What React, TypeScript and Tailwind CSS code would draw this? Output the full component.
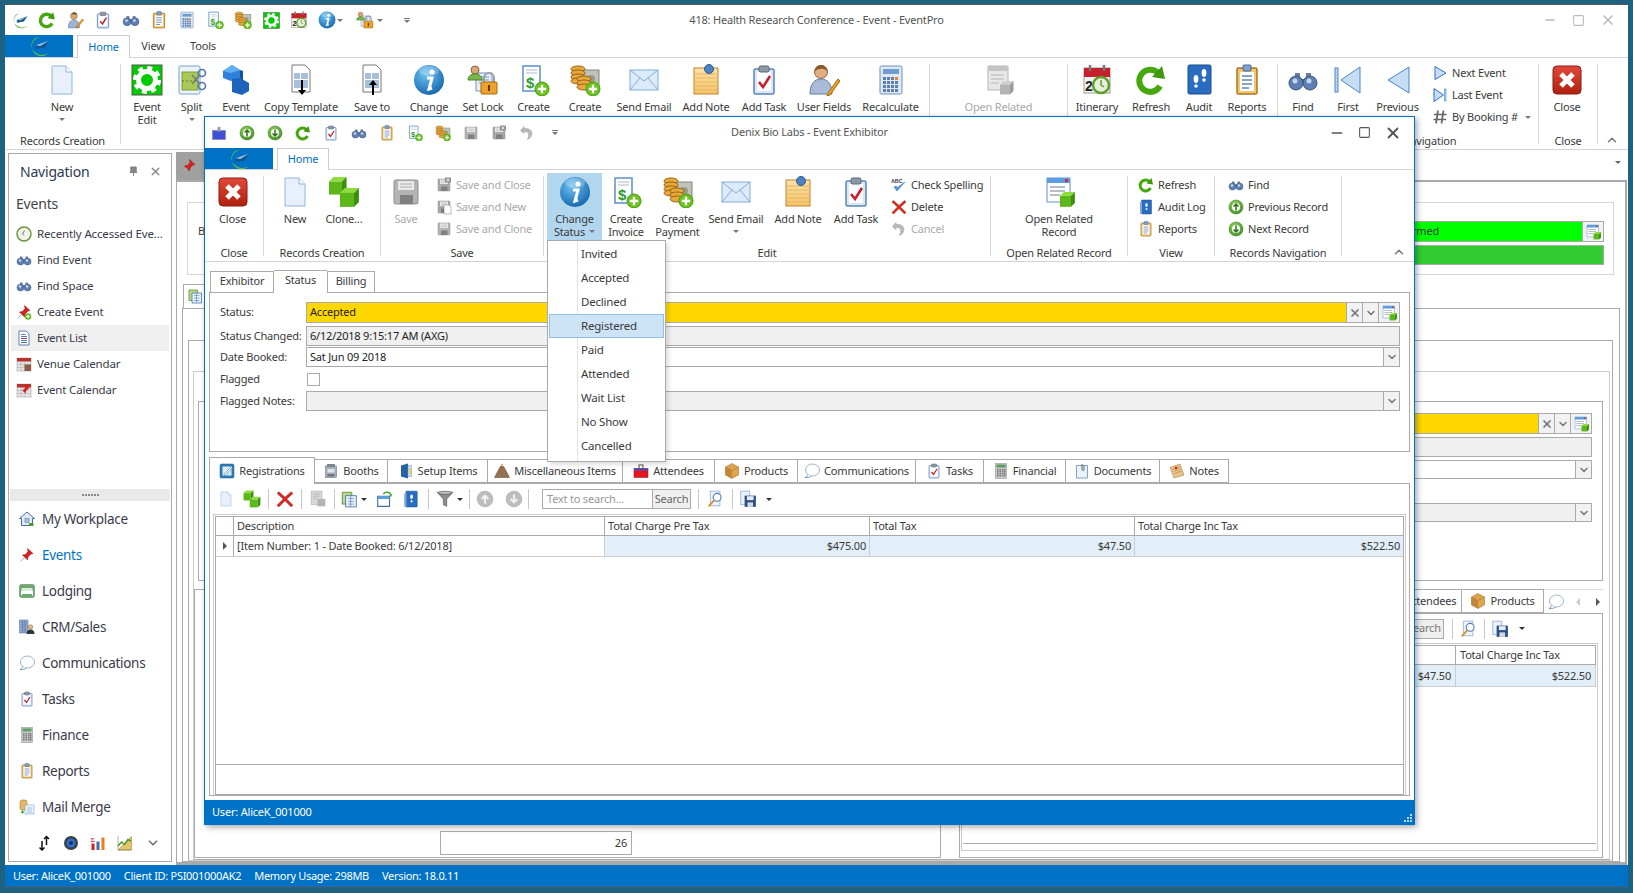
import type { ReactNode } from "react";
import { X, Minus, Square, ChevronDown, ChevronUp } from "lucide-react";

function Cube({ x, y, s, a = "#8fdc3c", b = "#5cb81a", c = "#3a8f0e" }: { x: number; y: number; s: number; a?: string; b?: string; c?: string }) {
  const d = s * 0.35;
  return (
    <g>
      <path d={`M${x} ${y + d}L${x + d} ${y}H${x + s + d}L${x + s} ${y + d}z`} fill={a} />
      <path d={`M${x} ${y + d}H${x + s}V${y + d + s}H${x}z`} fill={b} />
      <path d={`M${x + s} ${y + d}L${x + s + d} ${y}V${y + s}L${x + s} ${y + d + s}z`} fill={c} />
    </g>
  );
}

const Plus = ({ x = 24, y = 24, r = 7 }: { x?: number; y?: number; r?: number }) => (
  <g>
    <circle cx={x} cy={y} r={r} fill="#6cc21e" stroke="#4b9a10" />
    <path d={`M${x - r * 0.6} ${y}h${r * 1.2}M${x} ${y - r * 0.6}v${r * 1.2}`} stroke="#fff" strokeWidth="2.4" />
  </g>
);

const Bino = () => (
  <g>
    <rect x="8" y="9" width="5" height="7" fill="#6d7f99" />
    <rect x="19" y="9" width="5" height="7" fill="#6d7f99" />
    <rect x="13" y="15" width="6" height="5" fill="#46597a" />
    <circle cx="9" cy="19" r="7" fill="#5d80b4" stroke="#3e5578" />
    <circle cx="23" cy="19" r="7" fill="#5d80b4" stroke="#3e5578" />
    <circle cx="8" cy="17" r="2.5" fill="#c3d6ee" />
    <circle cx="22" cy="17" r="2.5" fill="#c3d6ee" />
  </g>
);

const Clip = ({ c = "#5b84c0", check = true }: { c?: string; check?: boolean }) => (
  <g>
    <rect x="6" y="5" width="20" height="25" rx="1.5" fill="#dbe7f6" stroke={c} strokeWidth="1.5" />
    <rect x="9" y="8" width="14" height="19" fill="#fff" />
    <rect x="11" y="2" width="10" height="6" rx="1.5" fill="#8e98a4" stroke="#5d6670" />
    {check ? <path d="M11 18l4 5 7-11" fill="none" stroke="#c8202a" strokeWidth="2.6" /> : null}
  </g>
);

const Floppy = ({ c = "#b4b4b4" }: { c?: string }) => (
  <g>
    <rect x="4" y="4" width="24" height="24" rx="1.5" fill={c} stroke="#8f8f8f" />
    <rect x="8" y="5" width="16" height="9" fill="#e9e9e9" />
    <path d="M10 8h12M10 11h12" stroke="#b0b0b0" />
    <rect x="10" y="19" width="13" height="9" fill="#808080" />
  </g>
);

const I: Record<string, ReactNode> = {
  swirl: (
    <g>
      <path d="M17 3A14 14 0 1 0 30 26 16 16 0 0 1 9 24 12 12 0 0 1 17 3z" fill="#5cc23e" />
      <path d="M11 15L31 8 24 18 11 20z" fill="#14538c" />
      <path d="M11 15L31 8 18 16z" fill="#8cc4ec" />
    </g>
  ),
  refresh: (
    <g>
      <path d="M23 9A11 11 0 1 0 25 22" fill="none" stroke="#46a80e" strokeWidth="6" />
      <path d="M17 13L30 15 27 2z" fill="#3e9a0c" />
    </g>
  ),
  user: (
    <g>
      <circle cx="14" cy="9" r="6" fill="#d9a878" stroke="#8d6238" />
      <path d="M12 3a6 5 0 0 1 8 3l-10 0z" fill="#7a5228" />
      <path d="M4 30c0-10 4-14 10-14s10 4 10 14z" fill="#9fb4d3" stroke="#6a7d9c" />
      <path d="M19 27L29 14l2 2-10 13-3 1z" fill="#f0a020" stroke="#a86a10" />
    </g>
  ),
  task: <Clip />,
  bino: <Bino />,
  report: (
    <g>
      <rect x="6" y="4" width="20" height="26" rx="1.5" fill="#f2c770" stroke="#a8761c" strokeWidth="1.5" />
      <rect x="9" y="8" width="14" height="19" fill="#fff" />
      <rect x="12" y="1" width="8" height="6" rx="1" fill="#7fa3cf" stroke="#44689a" />
      <path d="M11 12h10M11 16h10M11 20h10M11 24h7" stroke="#5b84c0" strokeWidth="1.5" />
    </g>
  ),
  calc: (
    <g>
      <rect x="5" y="2" width="22" height="28" rx="1.5" fill="#dfe9f5" stroke="#6a8fc0" />
      <rect x="8" y="5" width="16" height="5" fill="#6f9bd3" />
      {[13, 17, 21, 25].map((y) => [8, 12, 16, 20].map((x) => <rect key={`${x}-${y}`} x={x} y={y} width="3" height="3" fill={x === 20 && y < 17 ? "#e08a20" : "#5d7fae"} />))}
    </g>
  ),
  invoice: (
    <g>
      <path d="M5 2h17v25H5z" fill="#fff" stroke="#5b8fcf" strokeWidth="1.5" />
      <path d="M8 6h11M8 9h11" stroke="#b0b8c4" />
      <text x="8" y="24" fontSize="15" fontWeight="700" fill="#2f9a30" fontFamily="'Liberation Sans',sans-serif">$</text>
      <Plus x={24} y={25} />
    </g>
  ),
  coins: (
    <g>
      <rect x="13" y="6" width="17" height="18" fill="#c0c4b8" stroke="#80857a" />
      <circle cx="22" cy="15" r="4" fill="#969c8c" />
      {[5, 9, 13, 17].map((y) => <ellipse key={y} cx="9" cy={y} rx="7" ry="3" fill="#e8a83c" stroke="#9a6414" />)}
      {[15, 19, 23].map((y) => <ellipse key={y} cx="15" cy={y} rx="7" ry="3" fill="#e8a83c" stroke="#9a6414" />)}
      <Plus x={24} y={25} />
    </g>
  ),
  gear: (
    <g>
      <rect x="1" y="1" width="30" height="30" fill="#00cc00" stroke="#555" />
      <circle cx="16" cy="16" r="8.5" fill="none" stroke="#fff" strokeWidth="5" />
      <circle cx="16" cy="16" r="12" fill="none" stroke="#fff" strokeWidth="4" strokeDasharray="5 4.4" />
    </g>
  ),
  cal20: (
    <g>
      <rect x="3" y="4" width="26" height="25" fill="#f4f4f4" stroke="#999" />
      <rect x="3" y="4" width="26" height="9" fill="#c8202a" />
      <path d="M9 1v6M23 1v6" stroke="#777" strokeWidth="2.5" />
      <text x="4" y="27" fontSize="14" fontWeight="700" fill="#222" fontFamily="'Liberation Sans',sans-serif">2</text>
      <circle cx="20" cy="21" r="8" fill="#e8f0dc" stroke="#5fa02a" strokeWidth="2.5" />
      <path d="M20 16v5l3 2" stroke="#5fa02a" fill="none" strokeWidth="1.5" />
    </g>
  ),
  info: (
    <g>
      <circle cx="16" cy="16" r="15" fill="url(#gBlue)" />
      <ellipse cx="16" cy="7" rx="10" ry="5" fill="#fff" opacity="0.25" />
      <circle cx="19" cy="8" r="2.6" fill="#fff" />
      <path d="M14 14h5l-3 11 3-1" fill="none" stroke="#fff" strokeWidth="3" />
    </g>
  ),
  lock: (
    <g>
      <path d="M9 9h16v18H9z" fill="#e8eff8" stroke="#6f93c4" />
      <path d="M12 13h10M12 16h10M12 19h5" stroke="#6f93c4" />
      <circle cx="8" cy="6" r="4" fill="#d9a878" stroke="#8d6238" />
      <path d="M1 16c0-4 3-6 7-6s7 2 7 6z" fill="#7ab648" stroke="#4c8424" />
      <path d="M17 18v-4a5 5 0 0 1 10 0v4" fill="none" stroke="#9aa0a8" strokeWidth="2" />
      <rect x="14" y="18" width="16" height="12" rx="1" fill="#eda22a" stroke="#a36a10" />
      <rect x="21" y="21" width="2" height="6" fill="#5c3a08" />
    </g>
  ),
  newdoc: (
    <g>
      <path d="M6 2h14l6 6v22H6z" fill="#e8f1fb" stroke="#8fb4dc" />
      <path d="M20 2v6h6" fill="#fff" stroke="#8fb4dc" />
    </g>
  ),
  split: (
    <g>
      <rect x="3" y="2" width="21" height="28" rx="1.5" fill="#edf3fa" stroke="#7a9ec8" />
      <rect x="6" y="8" width="16" height="18" fill="#a8c858" stroke="#7f9e36" />
      <path d="M6 17h16" stroke="#5d7a20" strokeDasharray="2 2" />
      <circle cx="26" cy="9" r="3.5" fill="none" stroke="#4c78b0" strokeWidth="1.6" />
      <circle cx="26" cy="22" r="3.5" fill="none" stroke="#4c78b0" strokeWidth="1.6" />
      <path d="M24 11l-8 9M24 20l-8-9" stroke="#6c7a88" strokeWidth="1.5" />
    </g>
  ),
  cube: (
    <g>
      <path d="M3 7l9-6 8 5v9l-9 2-8-3z" fill="#2f80d8" />
      <path d="M12 1l8 5-9 3-8-2z" fill="#5fb0f2" />
      <path d="M12 15l8-1 9 5v8l-7 4-10-3z" fill="#1c64bc" />
      <path d="M20 6l3 1v10l-3-3z" fill="#12529e" />
    </g>
  ),
  docdown: (
    <g>
      <path d="M7 1h13l5 5v22H7z" fill="#fff" stroke="#777" />
      <rect x="9" y="9" width="6" height="6" fill="#a8bfdc" />
      <rect x="16" y="9" width="7" height="6" fill="#a8bfdc" />
      <rect x="9" y="16" width="14" height="8" fill="#a8bfdc" />
      <path d="M17 16v12" stroke="#000" strokeWidth="2" />
      <path d="M13 26h8l-4 5z" fill="#000" />
    </g>
  ),
  docup: (
    <g>
      <path d="M7 1h13l5 5v22H7z" fill="#fff" stroke="#777" />
      <rect x="9" y="9" width="6" height="6" fill="#a8bfdc" />
      <rect x="16" y="9" width="7" height="6" fill="#a8bfdc" />
      <rect x="9" y="16" width="14" height="8" fill="#a8bfdc" />
      <path d="M17 31V19" stroke="#000" strokeWidth="2" />
      <path d="M13 21h8l-4-5z" fill="#000" />
    </g>
  ),
  mail: (
    <g>
      <rect x="2" y="6" width="28" height="20" fill="#dcebfa" stroke="#84a9d4" />
      <path d="M2 6l14 11L30 6M2 26l10-12M30 26L20 14" fill="none" stroke="#84a9d4" />
    </g>
  ),
  note: (
    <g>
      <rect x="4" y="4" width="24" height="26" fill="url(#gOrange)" stroke="#c6802c" />
      <path d="M4 10h24M4 14h24M4 18h24M4 22h24M4 26h24" stroke="#e4b464" />
      <circle cx="19" cy="5" r="4.5" fill="#4d82bf" stroke="#2c5a90" />
    </g>
  ),
  fields: (
    <g>
      <circle cx="13" cy="8" r="6.5" fill="#e0ad82" stroke="#8d6238" />
      <path d="M7 7c0-5 4-6 6-6s6 1 6 6c-3-3-8-3-12 0z" fill="#8a5a2a" />
      <path d="M2 30c0-11 5-15 11-15s11 4 11 15z" fill="#a9bbd8" stroke="#6a7d9c" />
      <path d="M20 29L30 15l2 2-10 14-3 1z" fill="#f0a020" stroke="#a86a10" />
    </g>
  ),
  related0: (
    <g>
      <path d="M5 2h20v24H5z" fill="#e8e8e8" stroke="#b5b5b5" />
      <rect x="5" y="2" width="20" height="5" fill="#c4c4c4" />
      <path d="M8 11h13M8 15h13M8 19h8" stroke="#b5b5b5" />
      <Cube x={17} y={17} s={10} a="#d0d0d0" b="#b4b4b4" c="#9a9a9a" />
    </g>
  ),
  related: (
    <g>
      <path d="M4 2h23v24H4z" fill="#fff" stroke="#5d8fca" />
      <rect x="4" y="2" width="23" height="5" fill="#5d9ce0" />
      <rect x="22" y="3" width="3" height="3" fill="#d03030" />
      <path d="M7 11h15M7 15h15M7 19h10" stroke="#6a7a90" />
      <Cube x={17} y={16} s={11} />
    </g>
  ),
  audit: (
    <g>
      <rect x="5" y="1" width="23" height="29" rx="1.5" fill="#2a6cc0" stroke="#1a4c90" />
      <ellipse cx="13" cy="15" rx="2.4" ry="4" fill="#fff" />
      <circle cx="13" cy="22" r="1.8" fill="#fff" />
      <ellipse cx="21" cy="9" rx="2.4" ry="4" fill="#fff" />
      <circle cx="21" cy="16" r="1.8" fill="#fff" />
    </g>
  ),
  first: (
    <g>
      <rect x="3" y="4" width="3" height="24" fill="#bcd6f2" stroke="#4a86c8" />
      <path d="M28 3v26L9 16z" fill="#c6ddf5" stroke="#4a86c8" />
    </g>
  ),
  prev: <path d="M27 3v26L6 16z" fill="#c6ddf5" stroke="#4a86c8" />,
  next: <path d="M6 3v26l22-13z" fill="#c6ddf5" stroke="#2e72bd" strokeWidth="2" />,
  last: (
    <g>
      <path d="M4 3v26l19-13z" fill="#c6ddf5" stroke="#2e72bd" strokeWidth="2" />
      <rect x="25" y="4" width="3" height="24" fill="#bcd6f2" stroke="#2e72bd" />
    </g>
  ),
  hash: <path d="M12 3L8 29M23 3l-4 26M4 11h25M3 21h25" stroke="#666" strokeWidth="3.4" fill="none" />,
  close: (
    <g>
      <rect x="2" y="2" width="28" height="28" rx="4" fill="url(#gRed)" stroke="#8e1a10" />
      <path d="M10 10l12 12M22 10L10 22" stroke="#fff" strokeWidth="5" />
    </g>
  ),
  clone: (
    <g>
      <Cube x={1} y={1} s={13} />
      <Cube x={12} y={12} s={14} />
    </g>
  ),
  floppy: <Floppy />,
  floppyx: (
    <g>
      <Floppy c="#a8a8a8" />
      <rect x="18" y="1" width="12" height="10" fill="#8f8f8f" />
      <path d="M21 3l6 6M27 3l-6 6" stroke="#fff" strokeWidth="1.6" />
    </g>
  ),
  floppynew: (
    <g>
      <Floppy c="#a8a8a8" />
      <path d="M16 12h10l4 4v14H16z" fill="#fff" stroke="#777" />
    </g>
  ),
  undo: <path d="M10 3L3 11l7 6v-4c6-1 11 2 9 10l-2 6c8-4 10-10 8-16-2-5-8-7-15-6z" fill="#b9b9b9" stroke="#999" />,
  up: (
    <g>
      <circle cx="16" cy="16" r="14" fill="url(#gGreen)" stroke="#2e6e14" />
      <circle cx="16" cy="16" r="8" fill="#fff" />
      <path d="M16 23V11M11 15l5-5 5 5" fill="none" stroke="#2e6e14" strokeWidth="3" />
    </g>
  ),
  down: (
    <g>
      <circle cx="16" cy="16" r="14" fill="url(#gGreen)" stroke="#2e6e14" />
      <circle cx="16" cy="16" r="8" fill="#fff" />
      <path d="M16 9v12M11 17l5 5 5-5" fill="none" stroke="#2e6e14" strokeWidth="3" />
    </g>
  ),
  up0: (
    <g>
      <circle cx="16" cy="16" r="14" fill="#bdbdbd" stroke="#a0a0a0" />
      <path d="M16 24V11M10 16l6-6 6 6" fill="none" stroke="#f2f2f2" strokeWidth="3.6" />
    </g>
  ),
  down0: (
    <g>
      <circle cx="16" cy="16" r="14" fill="#bdbdbd" stroke="#a0a0a0" />
      <path d="M16 8v13M10 16l6 6 6-6" fill="none" stroke="#f2f2f2" strokeWidth="3.6" />
    </g>
  ),
  badge: (
    <g>
      <rect x="3" y="11" width="26" height="18" fill="#3f4fd8" stroke="#6f7fa0" />
      <rect x="13" y="4" width="6" height="9" fill="#9a9aa4" />
    </g>
  ),
  abc: (
    <g>
      <text x="0" y="11" fontSize="11" fontWeight="700" fill="#3c3c50" fontFamily="'Liberation Sans',sans-serif">ABC</text>
      <path d="M6 20l6 8L28 10l-15 11-3-3z" fill="#5d92d4" stroke="#2e6ab0" />
    </g>
  ),
  redx: <path d="M5 3l11 10L27 3l3 3-11 10 11 11-3 3-11-11L5 30l-3-3 11-11L2 6z" fill="#d8281e" stroke="#a81a12" />,
  pin: (
    <g>
      <path d="M17 3l11 10-4 1-6 6-1 6-10-10 6-1 5-6z" fill="#d81e1e" stroke="#8e1010" />
      <path d="M12 20l-9 9" stroke="#b0b0b0" strokeWidth="2" />
    </g>
  ),
  pinplus: (
    <g>
      <path d="M17 3l11 10-4 1-6 6-1 6-10-10 6-1 5-6z" fill="#d81e1e" stroke="#8e1010" />
      <path d="M12 20l-9 9" stroke="#b0b0b0" strokeWidth="2" />
      <Plus x={24} y={25} r={6} />
    </g>
  ),
  clock: (
    <g>
      <circle cx="16" cy="16" r="14" fill="#f0f4ea" stroke="#6f9440" strokeWidth="3" />
      <path d="M17 9l-4 7 3 3" fill="none" stroke="#555" strokeWidth="1.6" />
    </g>
  ),
  list: (
    <g>
      <path d="M6 2h14l6 6v22H6z" fill="#fff" stroke="#2e5d9c" strokeWidth="1.5" />
      <path d="M10 9h9M10 13h12M10 17h12M10 21h12M10 25h12" stroke="#1f4fa0" strokeWidth="1.5" />
      <path d="M10 17h12" stroke="#c8202a" strokeWidth="1.5" />
    </g>
  ),
  venue: (
    <g>
      <rect x="2" y="4" width="28" height="26" fill="#e4e4e4" stroke="#999" />
      <rect x="2" y="4" width="28" height="7" fill="#b8322a" />
      <path d="M2 17h28M2 23h28M10 11v19M18 11v19" stroke="#aaa" />
      <rect x="17" y="17" width="13" height="13" fill="#8e5a44" />
    </g>
  ),
  evcal: (
    <g>
      <rect x="2" y="4" width="28" height="26" fill="#e4e4e4" stroke="#999" />
      <rect x="2" y="4" width="28" height="7" fill="#b8322a" />
      <path d="M2 17h28M2 23h28M10 11v19M18 11v19" stroke="#aaa" />
      <path d="M19 6l8 7-3 1-4 4-1 5-7-7 4-1 3-5z" fill="#d81e1e" />
    </g>
  ),
  home: (
    <g>
      <path d="M16 2L1 15h4v14h22V15h4z" fill="#e2ebf6" stroke="#3f6ea8" strokeWidth="2" />
      <rect x="12" y="15" width="8" height="8" fill="#a9c3e2" stroke="#3f6ea8" />
      <rect x="20" y="24" width="9" height="6" fill="#4f9a2a" />
    </g>
  ),
  bed: (
    <g>
      <rect x="1" y="3" width="30" height="26" rx="4" fill="#6fa76e" stroke="#4e8050" />
      <rect x="5" y="10" width="22" height="6" fill="#dcead8" />
      <rect x="4" y="16" width="24" height="6" fill="#fff" />
      <path d="M5 22v3M27 22v3" stroke="#fff" strokeWidth="2" />
    </g>
  ),
  crm: (
    <g>
      <rect x="1" y="2" width="17" height="26" fill="#90a8cc" stroke="#56709a" />
      <path d="M4 7h11M4 12h11M4 17h11M4 22h11M7 2v26M12 2v26" stroke="#56709a" />
      <circle cx="23" cy="16" r="4.5" fill="#e8b880" stroke="#87613a" />
      <path d="M15 30c0-6 3-9 8-9s8 3 8 9z" fill="#2e3440" />
    </g>
  ),
  bubble: (
    <g>
      <ellipse cx="17" cy="14" rx="14" ry="12" fill="#fff" stroke="#8aa0b8" strokeWidth="1.6" />
      <path d="M8 23c-1 3-3 5-6 6 6 1 10-1 13-3" fill="#fff" stroke="#5588bb" strokeWidth="1.6" />
    </g>
  ),
  calcg: (
    <g>
      <rect x="5" y="1" width="22" height="30" fill="#c8c8c8" stroke="#8a8a8a" />
      <rect x="7" y="3" width="18" height="6" fill="#5f9e68" />
      {[12, 16, 20, 24].map((y) => [8, 13, 18, 22].map((x) => <rect key={`${x}${y}`} x={x} y={y} width="3" height="3" fill="#777" />))}
    </g>
  ),
  merge: (
    <g>
      <rect x="2" y="2" width="14" height="20" rx="4" fill="#e4b964" stroke="#96702a" />
      <path d="M12 12h18v18H12z" fill="#eef4fb" stroke="#5d8fca" />
      <path d="M16 18h10M16 22h10M16 26h10" stroke="#5d8fca" />
      <path d="M4 26h6M7 23v6" stroke="#3ea81e" strokeWidth="2.5" />
    </g>
  ),
  updown: (
    <g>
      <path d="M12 12v18M7 25l5 5 5-5" fill="none" stroke="#111" strokeWidth="3" />
      <path d="M21 20V3M16 8l5-5 5 5" fill="none" stroke="#111" strokeWidth="3" />
    </g>
  ),
  globe: (
    <g>
      <circle cx="16" cy="16" r="14" fill="#3a3f4a" />
      <circle cx="16" cy="16" r="9" fill="#2f6fd0" />
      <circle cx="16" cy="16" r="4" fill="#12345e" />
    </g>
  ),
  sigma: (
    <g>
      <text x="1" y="13" fontSize="14" fontWeight="700" fill="#d81e1e" fontFamily="'Liberation Serif',serif">Σ</text>
      <rect x="3" y="17" width="6" height="13" fill="#d81e1e" />
      <rect x="13" y="13" width="6" height="17" fill="#3a6db0" />
      <rect x="23" y="5" width="6" height="25" fill="#f07a14" />
    </g>
  ),
  tri: (
    <g>
      <path d="M29 3v27H2z" fill="#e4c66c" stroke="#9a7a24" />
      <path d="M2 22l7-8 6 5 7-10 6 3" fill="none" stroke="#4a9a2a" strokeWidth="3" />
      <path d="M2 2v28h27" fill="none" stroke="#5a6a4a" />
    </g>
  ),
  reg: (
    <g>
      <rect x="2" y="2" width="28" height="28" rx="3" fill="#2b7cb8" stroke="#1a5888" />
      <rect x="7" y="7" width="18" height="18" fill="#dcecf8" />
      <path d="M10 23L25 6l2 3-14 16z" fill="#fff" stroke="#1a5888" />
    </g>
  ),
  booth: (
    <g>
      <rect x="5" y="6" width="22" height="23" fill="#a6aeb8" stroke="#626a74" />
      <rect x="8" y="2" width="16" height="6" fill="#7c8490" />
      <rect x="9" y="12" width="14" height="7" fill="#dfe5ec" />
      <rect x="9" y="22" width="14" height="5" fill="#6e7682" />
    </g>
  ),
  setup: (
    <g>
      <path d="M6 5l14-4v30L6 27z" fill="#2264a8" />
      <path d="M20 5h7v22h-7z" fill="#cfe0f0" stroke="#6f93c4" />
      <rect x="21" y="10" width="5" height="12" fill="#e8d06c" />
    </g>
  ),
  volcano: (
    <g>
      <path d="M1 29L12 8h8l11 21z" fill="#947152" stroke="#5e442e" />
      <path d="M12 8c2-4 6-4 8 0z" fill="#d8541e" />
      <path d="M14 5c-2-2 0-4 2-3 2-2 4 1 2 3z" fill="#bcbcbc" />
    </g>
  ),
  attend: (
    <g>
      <rect x="2" y="11" width="28" height="18" fill="#e8141c" stroke="#8c1014" />
      <path d="M2 11h28v4H2z" fill="#3f4fd8" />
      <rect x="12" y="4" width="8" height="8" fill="none" stroke="#555" strokeWidth="2" />
    </g>
  ),
  box: (
    <g>
      <path d="M16 1l13 7v16l-13 7-13-7V8z" fill="#dfa54c" stroke="#96682a" />
      <path d="M3 8l13 7 13-7" fill="none" stroke="#96682a" />
      <path d="M16 15v16L3 24V8z" fill="#c28638" />
    </g>
  ),
  docs: (
    <g>
      <path d="M5 5h22v25H5z" fill="#eaf2fb" stroke="#5b84c0" strokeWidth="1.5" />
      <path d="M16 2v11a2 2 0 0 0 4 0V6" fill="none" stroke="#444" strokeWidth="1.6" />
    </g>
  ),
  notes: (
    <g>
      <path d="M2 9L22 2l8 22-20 6z" fill="#e9c489" stroke="#9a6f34" />
      <path d="M7 13l14-5M9 17l14-5M11 21l14-5" stroke="#a87a38" />
      <circle cx="14" cy="10" r="2.5" fill="#d81e1e" />
    </g>
  ),
  cols: (
    <g>
      <path d="M4 4h17v21H4z" fill="#b9d98a" stroke="#5e8a2e" strokeWidth="1.5" />
      <path d="M10 10h19v20H10z" fill="#eaf2fb" stroke="#3f6ea8" strokeWidth="1.5" />
      <path d="M14 15h11M14 20h11M14 25h11M19 11v18" stroke="#3f6ea8" />
    </g>
  ),
  winrefresh: (
    <g>
      <path d="M3 11h21v18H3z" fill="#fff" stroke="#3f6ea8" strokeWidth="2" />
      <rect x="3" y="11" width="21" height="5" fill="#5d9ce0" />
      <path d="M13 7c4-5 12-4 14 2l-3 3" fill="none" stroke="#3ea81e" strokeWidth="2.6" />
    </g>
  ),
  auditSm: (
    <g>
      <rect x="7" y="2" width="20" height="28" rx="1" fill="#2a6cc0" stroke="#1a4c90" />
      <rect x="4" y="6" width="4" height="24" fill="#7fa8dc" />
      <ellipse cx="17" cy="12" rx="2.4" ry="4" fill="#fff" />
      <circle cx="17" cy="20" r="2" fill="#fff" />
    </g>
  ),
  funnel: (
    <g>
      <path d="M2 4h28L19 16v13l-6-3V16z" fill="#8f8f8f" stroke="#444" />
      <ellipse cx="16" cy="5" rx="13" ry="2.6" fill="#c4c4c4" stroke="#444" />
    </g>
  ),
  docgray: (
    <g>
      <path d="M4 2h19v24H4z" fill="#d8d8d8" stroke="#a8a8a8" />
      <path d="M7 7h13M7 11h13M7 15h8" stroke="#aaa" />
      <rect x="15" y="16" width="14" height="13" fill="#b4b4b4" />
    </g>
  ),
  magnify: (
    <g>
      <path d="M6 2h17v26H6z" fill="#eef4fb" stroke="#5d8fca" />
      <circle cx="18" cy="13" r="7" fill="#fff" stroke="#4d7db0" strokeWidth="2" />
      <path d="M13 18L3 29" stroke="#d88c20" strokeWidth="3" />
    </g>
  ),
  saveAs: (
    <g>
      <path d="M3 2h16v24H3z" fill="#eaf2fb" stroke="#5d8fca" />
      <rect x="10" y="10" width="20" height="20" fill="#2d4f84" />
      <rect x="14" y="11" width="12" height="7" fill="#e4ecf6" />
      <rect x="15" y="22" width="10" height="8" fill="#d0d8e4" />
    </g>
  ),
};

function Ico({ n, s = 32 }: { n: string; s?: number }) {
  return (
    <svg viewBox="0 0 32 32" width={s} height={s} className="shrink-0">
      {I[n]}
    </svg>
  );
}

const Drop = ({ c = "border-t-[#777]" }: { c?: string }) => (
  <span className={`inline-block w-0 h-0 border-x-[3px] border-x-transparent border-t-[3px] ${c}`} />
);

function Big({ w, n, label, label2, drop, off }: { w: string; n?: string; label?: string; label2?: string; drop?: boolean; off?: boolean }) {
  return (
    <div className={`flex flex-col items-center shrink-0 ${w} ${off ? "text-[#a9a9a9]" : ""}`}>
      <div className="h-[36px]">{n ? <Ico n={n} /> : null}</div>
      <div className="leading-[13px] whitespace-nowrap">{label}</div>
      {label2 ? <div className="leading-[13px] whitespace-nowrap">{label2}</div> : null}
      {drop ? <div className="leading-[13px] flex items-center h-[13px]"><Drop /></div> : null}
    </div>
  );
}

function Small({ n, label, off, drop, s = 16 }: { n: string; label: string; off?: boolean; drop?: boolean; s?: number }) {
  return (
    <div className={`h-[22px] flex items-center gap-[4px] whitespace-nowrap ${off ? "text-[#a9a9a9]" : ""}`}>
      <Ico n={n} s={s} />
      <span>{label}</span>
      {drop ? <span className="ml-[3px] flex"><Drop /></span> : null}
    </div>
  );
}

function Group({ label, children, cls = "", noSep }: { label: string; children: ReactNode; cls?: string; noSep?: boolean }) {
  return (
    <div className={`flex flex-col h-[80px] shrink-0 ${noSep ? "" : "border-r border-[#d8d8d8]"} ${cls}`}>
      <div className="flex flex-1 min-h-0">{children}</div>
      <div className="mb-[-4px] h-[14px] leading-[14px] text-center whitespace-nowrap">{label}</div>
    </div>
  );
}

function Fld({ cls, children }: { cls: string; children?: ReactNode }) {
  return <div className={`border border-[#aaa] flex items-center pl-[3px] text-[#222] whitespace-nowrap overflow-hidden ${cls}`}>{children}</div>;
}

const Chev = () => (
  <div className="w-[16px] h-full border-l border-[#aaa] bg-[#f2f2f2] flex items-center justify-center shrink-0">
    <ChevronDown size={12} strokeWidth={3} className="text-[#777]" />
  </div>
);

const StatusRowEnd = () => (
  <>
    <div className="w-[16px] h-full border-l border-[#aaa] bg-[#f2f2f2] flex items-center justify-center shrink-0">
      <X size={12} strokeWidth={3.5} className="text-[#777]" />
    </div>
    <Chev />
    <div className="w-[21px] h-full border-l border-[#aaa] bg-[#f2f2f2] flex items-center justify-center shrink-0">
      <Ico n="related" s={16} />
    </div>
  </>
);

function Tab({ w, n, label, active }: { w: string; n: string; label: string; active?: boolean }) {
  return (
    <div className={`${w} shrink-0 flex items-center justify-center gap-[4px] border border-[#aaa] border-l-0 first:border-l whitespace-nowrap ${active ? "h-[27px] -mb-px bg-white border-b-0 z-10 self-end" : "h-[24px] self-end"}`}>
      <Ico n={n} s={16} />
      <span>{label}</span>
    </div>
  );
}

const Sep = () => <div className="w-px h-[20px] bg-[#c8c8c8] shrink-0" />;

function TB({ w, n, drop, s = 18 }: { w: string; n: string; drop?: boolean; s?: number }) {
  return (
    <div className={`${w} shrink-0 flex items-center justify-center gap-[3px]`}>
      <Ico n={n} s={s} />
      {drop ? <Drop c="border-t-[#333]" /> : null}
    </div>
  );
}

const qatMain = ["swirl", "refresh", "user", "task", "bino", "report", "calc", "invoice", "coins", "gear", "cal20", "info"];
const qatDlg = ["badge", "up", "down", "refresh", "task", "bino", "report", "invoice", "coins", "floppy", "floppyx", "undo"];
const navTop = [
  ["clock", "Recently Accessed Eve…"],
  ["bino", "Find Event"],
  ["bino", "Find Space"],
  ["pinplus", "Create Event"],
  ["list", "Event List"],
  ["venue", "Venue Calendar"],
  ["evcal", "Event Calendar"],
];
const navBottom = [
  ["home", "My Workplace"],
  ["pin", "Events"],
  ["bed", "Lodging"],
  ["crm", "CRM/Sales"],
  ["bubble", "Communications"],
  ["task", "Tasks"],
  ["calcg", "Finance"],
  ["report", "Reports"],
  ["merge", "Mail Merge"],
];
const statuses = ["Invited", "Accepted", "Declined", "Registered", "Paid", "Attended", "Wait List", "No Show", "Cancelled"];

function Navigation() {
  return (
    <div className="w-[164px] shrink-0 mt-[3px] mb-[3px] border border-[#aaa] flex flex-col">
      <div className="flex items-center h-[34px] shrink-0 pl-[11px] text-[14px] tracking-[-0.2px] text-[#2c3a55]">
        <span className="flex-1">Navigation</span>
        <svg viewBox="0 0 10 12" width="9" height="11" className="mr-[11px]"><path d="M2 1h6v5l1 1H1l1-1zM5 7v4" fill="#888" stroke="#777" /></svg>
        <X size={13} strokeWidth={2.5} className="mr-[9px] text-[#888]" />
      </div>
      <div className="pl-[7px] h-[28px] shrink-0 pt-[2px] text-[14px] tracking-[-0.2px] leading-[28px] text-[#444]">Events</div>
      <div className="flex flex-col mt-[5px] px-[2px] text-[11.5px] tracking-[-0.15px] text-[#3a3a4a]">
        {navTop.map(([n, label]) => (
          <div key={label} className={`h-[26px] flex items-center pl-[5px] gap-[5px] whitespace-nowrap ${label === "Event List" ? "bg-[#efefef]" : ""}`}>
            <Ico n={n} s={16} />
            <span>{label}</span>
          </div>
        ))}
      </div>
      <div className="mt-auto mx-[1px] h-[12px] shrink-0 bg-[#e9e9e9] flex items-center justify-center gap-[1px]">
        {[0, 1, 2, 3, 4, 5].map((d) => <span key={d} className="w-[2px] h-[2px] bg-[#888]" />)}
      </div>
      <div className="flex flex-col text-[13.5px] tracking-[-0.3px] text-[#3a3a4a]">
        {navBottom.map(([n, label]) => (
          <div key={label} className="h-[36px] flex items-center pl-[10px] gap-[7px] whitespace-nowrap">
            <Ico n={n} s={16} />
            <span className={label === "Events" ? "text-[#0072c6]" : ""}>{label}</span>
          </div>
        ))}
      </div>
      <div className="h-[36px] shrink-0 flex items-center pl-[27px] gap-[11px]">
        <Ico n="updown" s={16} />
        <Ico n="globe" s={16} />
        <Ico n="sigma" s={16} />
        <Ico n="tri" s={16} />
        <ChevronDown size={14} strokeWidth={3} className="ml-[2px] text-[#777]" />
      </div>
    </div>
  );
}

function MainRibbon() {
  return (
    <div className="h-[92px] border-b border-[#d4d4d4] flex pt-[6px] relative">
      <Group label="Records Creation" cls="w-[116px]">
        <Big w="w-[114px]" n="newdoc" label="New" drop />
      </Group>
      <Group label="" noSep={false}>
        <Big w="w-[52px]" n="gear" label="Event" label2="Edit" />
        <Big w="w-[37px]" n="split" label="Split" drop />
        <Big w="w-[52px]" n="cube" label="Event" />
        <Big w="w-[78px]" n="docdown" label="Copy Template" />
        <Big w="w-[64px]" n="docup" label="Save to" />
        <Big w="w-[50px]" n="info" label="Change" />
        <Big w="w-[58px]" n="lock" label="Set Lock" />
        <Big w="w-[43px]" n="invoice" label="Create" />
        <Big w="w-[60px]" n="coins" label="Create" />
        <Big w="w-[58px]" n="mail" label="Send Email" />
        <Big w="w-[66px]" n="note" label="Add Note" />
        <Big w="w-[50px]" n="task" label="Add Task" />
        <Big w="w-[70px]" n="fields" label="User Fields" />
        <Big w="w-[63px]" n="calc" label="Recalculate" />
        <div className="w-[7px]" />
      </Group>
      <Group label="">
        <Big w="w-[137px]" n="related0" label="Open Related" off />
      </Group>
      <Group label="">
        <Big w="w-[58px]" n="cal20" label="Itinerary" />
        <Big w="w-[50px]" n="refresh" label="Refresh" />
        <Big w="w-[46px]" n="audit" label="Audit" />
        <Big w="w-[50px]" n="report" label="Reports" />
        <div className="w-[5px]" />
      </Group>
      <Group label="Records Navigation" cls="w-[261px]">
        <Big w="w-[50px]" n="bino" label="Find" />
        <Big w="w-[40px]" n="first" label="First" />
        <Big w="w-[59px]" n="prev" label="Previous" />
        <div className="mt-[-2px] ml-[5px]">
          <Small n="next" label="Next Event" />
          <Small n="last" label="Last Event" />
          <Small n="hash" label="By Booking #" drop />
        </div>
      </Group>
      <Group label="Close" cls="w-[59px]">
        <Big w="w-[56px]" n="close" label="Close" />
      </Group>
      <ChevronUp size={14} strokeWidth={2.5} className="mt-[69px] ml-[7px] text-[#777]" />
    </div>
  );
}

function Background() {
  return (
    <div className="flex-1 min-w-0 flex flex-col">
      <div className="h-[30px] flex items-end justify-between">
        <div className="w-[60px] h-[28px] bg-[#a0a0a0] flex items-center pl-[5px]">
          <Ico n="pin" s={16} />
        </div>
        <span className="mb-[12px] mr-[6px]"><Drop c="border-t-[#666]" /></span>
      </div>
      <div className="flex-1 min-h-0 border-t-2 border-r-2 border-l border-b-[3px] border-[#aaa] flex flex-col pt-[20px]">
        <div className="ml-[10px] mr-[11px] h-[73px] shrink-0 border border-[#d6d6d6] pl-[10px] pr-[9px] pt-[18px] flex flex-col gap-[3px]">
          <div className="flex h-[21px] items-center justify-between">
            <span>Booked</span>
            <div className="flex h-full border border-[#aaa]">
              <div className="w-[210px] bg-[#00ff00] pl-[14px] flex items-center">Confirmed</div>
              <div className="w-[21px] bg-[#f2f2f2] border-l border-[#aaa] flex items-center justify-center"><Ico n="related" s={16} /></div>
            </div>
          </div>
          <div className="h-[20px] ml-[100px] bg-[#33cc33] border border-[#aaa]" />
        </div>
        <div className="mt-[9px] ml-[6px] flex h-[24px] shrink-0">
          <div className="w-[60px] border border-[#aaa] border-b-0 pl-[3px] pt-[3px]"><Ico n="cols" s={16} /></div>
        </div>
        <div className="mx-[5px] mb-[0px] flex-1 min-h-0 border border-[#aaa] pt-[31px] flex flex-col">
          <div className="ml-[5px] mr-[6px] flex-1 min-h-0 border border-[#aaa] border-b-[#ccc] pt-[30px] flex flex-col">
            <div className="ml-[4px] mr-[2px] flex-1 min-h-0 border border-[#ccc] border-b-[#aaa] pt-[29px] pr-[6px] flex flex-col">
              <div className="ml-[4px] h-[180px] shrink-0 border border-[#aaa] pt-[11px] pr-[10px] pl-[100px] flex flex-col">
                <Fld cls="h-[21px] !pl-0"><div className="flex-1 h-full bg-[#ffd700]" /><StatusRowEnd /></Fld>
                <Fld cls="h-[20px] mt-[3px] bg-[#f0f0f0]" />
                <Fld cls="h-[19px] mt-[3px] !pl-0 justify-end"><Chev /></Fld>
                <Fld cls="h-[19px] mt-[24px] !pl-0 justify-end bg-[#f0f0f0]"><Chev /></Fld>
              </div>
              <div className="flex flex-1 min-h-0 mt-[8px] gap-[18px] mb-[1px]">
                <div className="w-[747px] shrink-0 border border-[#aaa] flex flex-col justify-end items-start pl-[245px] pb-[2px]">
                  <div className="w-[192px] h-[24px] border border-[#aaa] flex items-center justify-end pr-[4px]">26</div>
                </div>
                <div className="flex-1 min-w-0 flex flex-col">
                  <div className="flex h-[24px] shrink-0 justify-end items-end">
                    <Tab w="w-[82px]" n="attend" label="Attendees" />
                    <Tab w="w-[82px]" n="box" label="Products" />
                    <div className="w-[59px] h-[24px] overflow-hidden flex items-center pl-[4px] gap-[12px] border-t border-[#ddd]">
                      <Ico n="bubble" s={16} />
                      <span className="w-0 h-0 border-y-[4px] border-y-transparent border-r-[4px] border-r-[#ccc]" />
                      <span className="ml-[4px] w-0 h-0 border-y-[4px] border-y-transparent border-l-[4px] border-l-[#555]" />
                    </div>
                  </div>
                  <div className="flex-1 min-h-0 border border-[#aaa] pb-[6px] px-[1px] flex flex-col">
                    <div className="h-[29px] flex items-center justify-end pr-[76px] shrink-0">
                      <div className="w-[40px] h-[20px] border border-[#aaa] bg-[#efefef] text-[#777] flex items-center justify-center">Search</div>
                      <div className="w-[8px]" /><Sep />
                      <TB w="w-[31px]" n="magnify" /><Sep />
                      <TB w="w-[30px]" n="saveAs" />
                      <span className="ml-[4px] flex"><Drop c="border-t-[#333]" /></span>
                    </div>
                    <div className="flex-1 min-h-0 mr-[3px] border border-[#ccc] p-[1px] flex flex-col">
                      <div className="flex h-[20px] border border-[#aaa] justify-end items-center">
                        <div className="w-[140px] h-full border-l border-[#aaa] pl-[4px] flex items-center">Total Charge Inc Tax</div>
                      </div>
                      <div className="flex h-[22px] border-x border-b border-[#ccc] justify-end bg-[#e2eff9]">
                        <div className="flex-1 pr-[4px] text-right leading-[21px]">$47.50</div>
                        <div className="w-[140px] border-l border-[#ccc] pr-[4px] text-right leading-[21px]">$522.50</div>
                      </div>
                      <div className="flex-1" />
                      <div className="border-t border-[#aaa] h-[6px]" />
                    </div>
                  </div>
                </div>
              </div>
            </div>
          </div>
        </div>
      </div>
    </div>
  );
}

function StatusMenu() {
  return (
    <div className="absolute left-[342px] top-[123px] w-[119px] h-[222px] z-20 bg-white border border-[#aaa] shadow-[3px_3px_4px_rgba(0,0,0,0.12)] text-[11.5px]">
      <div className="absolute left-[29px] top-0 bottom-0 w-px bg-[#e2e2e2]" />
      <div className="flex flex-col pt-[1px] px-[1px] relative">
        {statuses.map((s) => (
          <div key={s} className={`h-[24px] flex items-center ${s === "Registered" ? "bg-[#cde4f7] border border-[#90c0e8] pl-[31px]" : "pl-[32px]"}`}>
            {s}
          </div>
        ))}
      </div>
    </div>
  );
}

function Dialog() {
  return (
    <div className="absolute left-[204px] top-[116px] w-[1211px] h-[709px] bg-white border border-[#0072c6] shadow-[2px_2px_6px_rgba(0,0,0,0.35)] flex flex-col text-[#3a3a3a]">
      <div className="h-[31px] shrink-0 grid grid-cols-[1fr_auto_1fr] items-center">
        <div className="flex items-center">
          {qatDlg.map((n, i) => (
            <div key={i} className="w-[28px] flex justify-center"><Ico n={n} s={16} /></div>
          ))}
          <div className="w-[28px] flex flex-col items-center gap-[1px]">
            <span className="w-[6px] h-px bg-[#777]" /><Drop />
          </div>
        </div>
        <div className="text-[#555]">Denix Bio Labs - Event Exhibitor</div>
        <div className="flex justify-end items-center gap-[13px] pr-[12px] text-[#555]">
          <Minus size={16} strokeWidth={2.5} />
          <Square size={13} strokeWidth={2} />
          <X size={18} strokeWidth={2.5} />
        </div>
      </div>
      <div className="h-[22px] shrink-0 flex border-b border-[#d4d4d4]">
        <div className="w-[68px] bg-[#0072c6] flex items-center justify-center"><Ico n="swirl" s={22} /></div>
        <div className="ml-[4px] w-[52px] h-[22px] border border-[#ccc] border-b-0 bg-white text-[#0072c6] flex items-center justify-center">Home</div>
      </div>
      <div className="h-[92px] shrink-0 border-b border-[#d4d4d4] flex pt-[6px]">
        <Group label="Close" cls="w-[59px]">
          <Big w="w-[55px]" n="close" label="Close" />
        </Group>
        <Group label="Records Creation" cls="w-[117px]">
          <Big w="w-[62px]" n="newdoc" label="New" />
          <Big w="w-[36px]" n="clone" label="Clone…" />
        </Group>
        <Group label="Save" cls="w-[163px]">
          <Big w="w-[50px]" n="floppy" label="Save" off />
          <div className="mt-[-2px] ml-[5px]">
            <Small n="floppyx" label="Save and Close" off />
            <Small n="floppynew" label="Save and New" off />
            <Small n="floppy" label="Save and Clone" off />
          </div>
        </Group>
        <Group label="Edit" cls="w-[447px]">
          <div className="ml-[3px] w-[55px] h-[68px] -mt-[3px] pt-[3px] bg-[#b2d6ee] flex flex-col items-center shrink-0">
            <div className="h-[36px]"><Ico n="info" /></div>
            <div className="leading-[13px]">Change</div>
            <div className="leading-[13px] flex items-center gap-[4px]">Status <Drop /></div>
          </div>
          <Big w="w-[48px]" n="invoice" label="Create" label2="Invoice" />
          <Big w="w-[55px]" n="coins" label="Create" label2="Payment" />
          <Big w="w-[62px]" n="mail" label="Send Email" drop />
          <Big w="w-[62px]" n="note" label="Add Note" />
          <Big w="w-[54px]" n="task" label="Add Task" />
          <div className="mt-[-2px] ml-[8px]">
            <Small n="abc" label="Check Spelling" />
            <Small n="redx" label="Delete" />
            <Small n="undo" label="Cancel" off />
          </div>
        </Group>
        <Group label="Open Related Record" cls="w-[137px]">
          <Big w="w-[136px]" n="related" label="Open Related" label2="Record" />
        </Group>
        <Group label="View" cls="w-[87px]">
          <div className="mt-[-2px] ml-[10px]">
            <Small n="refresh" label="Refresh" />
            <Small n="auditSm" label="Audit Log" />
            <Small n="report" label="Reports" />
          </div>
        </Group>
        <Group label="Records Navigation" cls="w-[127px]">
          <div className="mt-[-2px] ml-[13px]">
            <Small n="bino" label="Find" />
            <Small n="up" label="Previous Record" />
            <Small n="down" label="Next Record" />
          </div>
        </Group>
        <ChevronUp size={14} strokeWidth={2.5} className="mt-[69px] ml-[50px] text-[#777]" />
      </div>
      <div className="flex-1 min-h-0 flex flex-col px-[4px] pb-[4px] pt-[7px]">
        <div className="flex h-[23px] shrink-0 items-end ml-[1px]">
          <div className="w-[64px] h-[21px] border border-[#aaa] border-b-0 pb-[2px] flex items-center justify-center">Exhibitor</div>
          <div className="w-[53px] h-[23px] border-t border-[#aaa] bg-white -mb-px z-10 pb-[3px] flex items-center justify-center">Status</div>
          <div className="w-[48px] h-[21px] border border-[#aaa] border-b-0 pb-[2px] flex items-center justify-center">Billing</div>
        </div>
        <div className="h-[160px] shrink-0 border border-[#aaa] pt-[9px] pl-[10px] pr-[9px] flex flex-col">
          <div className="flex h-[21px] items-center">
            <span className="w-[86px] shrink-0 whitespace-nowrap">Status:</span>
            <Fld cls="flex-1 h-full !pl-0">
              <div className="flex-1 h-full bg-[#ffd700] pl-[3px] flex items-center">Accepted</div>
              <StatusRowEnd />
            </Fld>
          </div>
          <div className="flex h-[20px] items-center mt-[3px]">
            <span className="w-[86px] shrink-0 whitespace-nowrap">Status Changed:</span>
            <Fld cls="flex-1 h-full bg-[#f0f0f0]">6/12/2018 9:15:17 AM (AXG)</Fld>
          </div>
          <div className="flex h-[20px] items-center mt-[1px]">
            <span className="w-[86px] shrink-0 whitespace-nowrap">Date Booked:</span>
            <Fld cls="flex-1 h-full !pr-0 justify-between">Sat Jun 09 2018<Chev /></Fld>
          </div>
          <div className="flex h-[24px] items-center">
            <span className="w-[87px] shrink-0">Flagged</span>
            <span className="w-[13px] h-[13px] border border-[#aaa]" />
          </div>
          <div className="flex h-[20px] items-center">
            <span className="w-[86px] shrink-0 whitespace-nowrap">Flagged Notes:</span>
            <Fld cls="flex-1 h-full bg-[#f0f0f0] !pr-0 justify-end"><Chev /></Fld>
          </div>
        </div>
        <div className="flex h-[27px] mt-[4px] shrink-0 items-end relative">
          <Tab w="w-[106px]" n="reg" label="Registrations" active />
          <Tab w="w-[73px]" n="booth" label="Booths" />
          <Tab w="w-[100px]" n="setup" label="Setup Items" />
          <Tab w="w-[135px]" n="volcano" label="Miscellaneous Items" />
          <Tab w="w-[92px]" n="attend" label="Attendees" />
          <Tab w="w-[83px]" n="box" label="Products" />
          <Tab w="w-[118px]" n="bubble" label="Communications" />
          <Tab w="w-[68px]" n="task" label="Tasks" />
          <Tab w="w-[82px]" n="calcg" label="Financial" />
          <Tab w="w-[94px]" n="docs" label="Documents" />
          <Tab w="w-[69px]" n="notes" label="Notes" />
        </div>
        <div className="flex-1 min-h-0 border border-[#aaa] px-[3px] flex flex-col">
          <div className="h-[30px] flex items-center shrink-0">
            <TB w="w-[26px]" n="newdoc" s={16} />
            <TB w="w-[26px]" n="clone" s={18} />
            <div className="w-[3px]" /><Sep />
            <TB w="w-[32px]" n="redx" />
            <Sep />
            <TB w="w-[32px]" n="docgray" />
            <Sep />
            <TB w="w-[36px]" n="cols" drop />
            <TB w="w-[28px]" n="winrefresh" />
            <TB w="w-[24px]" n="auditSm" />
            <div className="w-[5px]" /><Sep />
            <TB w="w-[40px]" n="funnel" drop />
            <Sep />
            <TB w="w-[30px]" n="up0" />
            <TB w="w-[28px]" n="down0" />
            <Sep />
            <div className="ml-[13px] w-[149px] h-[20px] border border-[#aaa] flex">
              <span className="flex-1 pl-[4px] text-[#999] leading-[18px]">Text to search...</span>
              <span className="w-[38px] bg-[#efefef] border-l border-[#aaa] text-[#666] text-center leading-[18px]">Search</span>
            </div>
            <div className="w-[7px]" /><Sep />
            <TB w="w-[33px]" n="magnify" />
            <Sep />
            <TB w="w-[30px]" n="saveAs" />
            <span className="ml-[3px] flex"><Drop c="border-t-[#333]" /></span>
          </div>
          <div className="flex-1 min-h-0 border border-[#ccc] border-b-0 p-[1px] pb-0 flex flex-col">
            <div className="flex-1 min-h-0 border border-[#aaa] flex flex-col">
              <div className="flex h-[19px] shrink-0 border-b border-[#aaa]">
                <div className="w-[18px] border-r border-[#aaa]" />
                <div className="w-[371px] border-r border-[#aaa] pl-[3px] leading-[18px]">Description</div>
                <div className="w-[265px] border-r border-[#aaa] pl-[3px] leading-[18px]">Total Charge Pre Tax</div>
                <div className="w-[265px] border-r border-[#aaa] pl-[3px] leading-[18px]">Total Tax</div>
                <div className="flex-1 pl-[3px] leading-[18px]">Total Charge Inc Tax</div>
              </div>
              <div className="flex h-[21px] shrink-0 border-b border-[#ccc]">
                <div className="w-[18px] border-r border-[#aaa] flex items-center justify-center">
                  <span className="w-0 h-0 border-y-[4px] border-y-transparent border-l-[4px] border-l-[#555]" />
                </div>
                <div className="w-[371px] border-r border-[#ccc] pl-[3px] leading-[20px]">[Item Number: 1 - Date Booked: 6/12/2018]</div>
                <div className="w-[265px] border-r border-[#ccc] bg-[#e2eff9] pr-[3px] text-right leading-[20px]">$475.00</div>
                <div className="w-[265px] border-r border-[#ccc] bg-[#e2eff9] pr-[3px] text-right leading-[20px]">$47.50</div>
                <div className="flex-1 bg-[#e2eff9] pr-[3px] text-right leading-[20px]">$522.50</div>
              </div>
              <div className="flex-1" />
              <div className="h-[30px] shrink-0 border-t border-[#aaa]" />
            </div>
          </div>
        </div>
      </div>
      <div className="h-[24px] shrink-0 bg-[#0072c6] text-white flex items-center pl-[7px] relative">
        User: AliceK_001000
        <svg viewBox="0 0 8 8" width="8" height="8" className="absolute right-[2px] bottom-[2px]"><path d="M6 0h2v2H6zM3 3h2v2H3zM6 3h2v2H6zM0 6h2v2H0zM3 6h2v2H3zM6 6h2v2H6z" fill="#bcd8ee" /></svg>
      </div>
      <StatusMenu />
    </div>
  );
}

export default function App() {
  return (
    <div className="relative w-[1633px] h-[893px] overflow-hidden bg-[#1f6280] pt-[4px] pl-[5px] pr-[5px] pb-[5px] font-['Noto_Sans',sans-serif] text-[11px] tracking-[-0.2px] text-[#3a3a3a]">
      <svg className="absolute w-0 h-0">
        <defs>
          <radialGradient id="gBlue" cx="0.4" cy="0.3" r="0.8"><stop offset="0" stopColor="#6ec3f2" /><stop offset="1" stopColor="#0d5ea8" /></radialGradient>
          <radialGradient id="gGreen" cx="0.4" cy="0.3" r="0.8"><stop offset="0" stopColor="#8fd45a" /><stop offset="1" stopColor="#3c8c1e" /></radialGradient>
          <linearGradient id="gRed" x1="0" y1="0" x2="0" y2="1"><stop offset="0" stopColor="#e0483a" /><stop offset="1" stopColor="#b0210f" /></linearGradient>
          <linearGradient id="gOrange" x1="0" y1="0" x2="0" y2="1"><stop offset="0" stopColor="#fbe3a8" /><stop offset="1" stopColor="#f5c468" /></linearGradient>
        </defs>
      </svg>
      <div className="w-full h-full bg-white border-t border-[#555] flex flex-col">
        <div className="h-[30px] shrink-0 grid grid-cols-[1fr_auto_1fr] items-center">
          <div className="flex items-center">
            {qatMain.map((n) => (
              <div key={n} className="w-[28px] flex justify-center"><Ico n={n} s={n === "gear" || n === "swirl" ? 17 : 18} /></div>
            ))}
            <span className="ml-[-4px] mr-[4px] flex"><Drop /></span>
            <div className="w-[28px] flex justify-center ml-[4px]"><Ico n="lock" s={18} /></div>
            <span className="ml-[-2px] flex"><Drop /></span>
            <div className="w-[28px] ml-[10px] flex flex-col items-center gap-[1px]">
              <span className="w-[6px] h-px bg-[#777]" /><Drop />
            </div>
          </div>
          <div className="text-[#555]">418: Health Research Conference - Event - EventPro</div>
          <div className="flex justify-end items-center gap-[15px] pr-[12px] text-[#bbb]">
            <Minus size={14} strokeWidth={2.5} />
            <Square size={13} strokeWidth={2} />
            <X size={16} strokeWidth={2.5} />
          </div>
        </div>
        <div className="h-[23px] shrink-0 flex border-b border-[#d4d4d4]">
          <div className="w-[68px] bg-[#0072c6] flex items-center justify-center"><Ico n="swirl" s={22} /></div>
          <div className="ml-[4px] w-[53px] h-[23px] border border-[#ccc] border-b-0 bg-white text-[#0072c6] flex items-center justify-center">Home</div>
          <div className="ml-[5px] w-[36px] flex items-center justify-center">View</div>
          <div className="ml-[14px] w-[36px] flex items-center justify-center">Tools</div>
        </div>
        <MainRibbon />
        <div className="flex-1 min-h-0 flex pl-[3px] pr-[1px] gap-[4px]">
          <Navigation />
          <Background />
        </div>
        <div className="h-[23px] shrink-0 bg-[#0072c6] text-white tracking-[-0.3px] flex items-center pl-[8px] gap-[13px] border-b border-[#555]">
          <span>User: AliceK_001000</span>
          <span>Client ID: PSI001000AK2</span>
          <span>Memory Usage: 298MB</span>
          <span>Version: 18.0.11</span>
        </div>
      </div>
      <Dialog />
    </div>
  );
}
